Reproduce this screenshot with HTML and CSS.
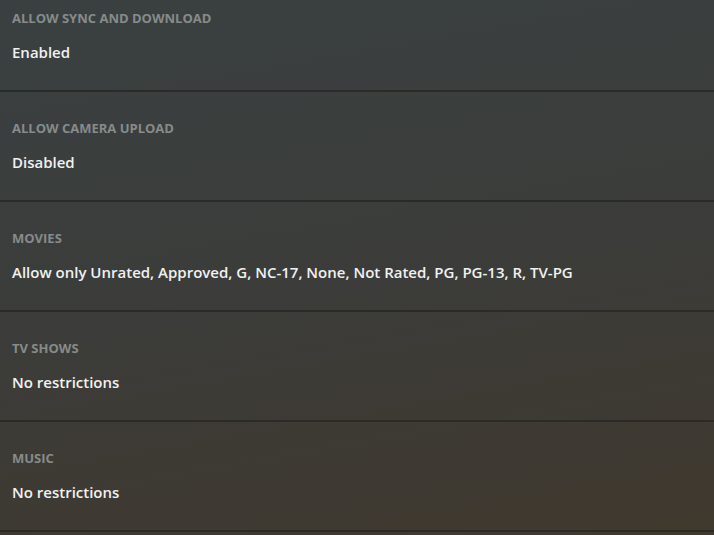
FILE: index.html
```html
<!DOCTYPE html>
<html lang="en">
<head>
    <meta charset="UTF-8">
    <title>Restrictions</title>
    <link rel="stylesheet" href="styles.css">
</head>
<body>
    <ul class="settingsList">
        <li class="settingItem">
            <h4 class="settingLabel">Allow Sync and Download</h4>
            <p class="settingValue">Enabled</p>
        </li>
        <li class="settingItem">
            <h4 class="settingLabel">Allow Camera Upload</h4>
            <p class="settingValue">Disabled</p>
        </li>
        <li class="settingItem">
            <h4 class="settingLabel">Movies</h4>
            <p class="settingValue">Allow only Unrated, Approved, G, NC-17, None, Not Rated, PG, PG-13, R, TV-PG</p>
        </li>
        <li class="settingItem">
            <h4 class="settingLabel">TV Shows</h4>
            <p class="settingValue">No restrictions</p>
        </li>
        <li class="settingItem">
            <h4 class="settingLabel">Music</h4>
            <p class="settingValue">No restrictions</p>
        </li>
    </ul>
</body>
</html>
```

FILE: styles.css
```css
* {
    padding: 0;
    margin: 0;
    box-sizing: border-box;
}

html,
body {
    height: 100%;
}

body {
    font-family: "Open Sans", "Liberation Sans", sans-serif;
    background: linear-gradient(170deg, #3a4041 0%, #3b3d3b 45%, #3e3a33 80%, #40392e 100%);
    overflow: hidden;
}

/* list is scrolled a little, top of the first row is out of view */
ul.settingsList {
    list-style: none;
    margin-top: -18px;
}

li.settingItem {
    height: 110px;
    padding: 27px 12px 0;
    border-bottom: 2px solid #2a2a27;
}

h4.settingLabel {
    font-size: 13px;
    line-height: 18px;
    font-weight: 700;
    text-transform: uppercase;
    color: #878b8a;
}

p.settingValue {
    margin-top: 15px;
    font-size: 15px;
    line-height: 20px;
    font-weight: 600;
    color: #f1f1f1;
}
```
